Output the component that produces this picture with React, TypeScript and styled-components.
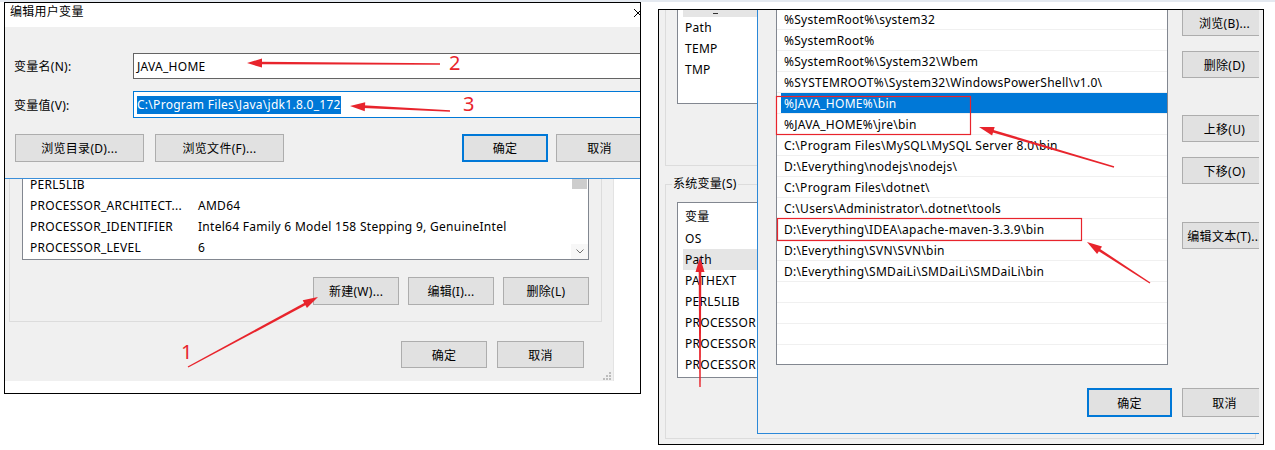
import styled, { createGlobalStyle } from 'styled-components';

const GlobalStyle = createGlobalStyle`
  html, body { margin: 0; padding: 0; background: #fff; }
  body {
    font-family: "Noto Sans", "Noto Sans CJK SC", sans-serif;
    font-size: 12px;
    letter-spacing: 0.28px;
    color: #000;
  }
  * { box-sizing: border-box; }
`;

const RED = '#e8242c';

const userVarRows = [
  ['PERL5LIB', ''],
  ['PROCESSOR_ARCHITECT...', 'AMD64'],
  ['PROCESSOR_IDENTIFIER', 'Intel64 Family 6 Model 158 Stepping 9, GenuineIntel'],
  ['PROCESSOR_LEVEL', '6'],
];

const sysVarRows = ['OS', 'Path', 'PATHEXT', 'PERL5LIB', 'PROCESSOR', 'PROCESSOR', 'PROCESSOR'];

const pathRows = [
  '%SystemRoot%\\system32',
  '%SystemRoot%',
  '%SystemRoot%\\System32\\Wbem',
  '%SYSTEMROOT%\\System32\\WindowsPowerShell\\v1.0\\',
  '%JAVA_HOME%\\bin',
  '%JAVA_HOME%\\jre\\bin',
  'C:\\Program Files\\MySQL\\MySQL Server 8.0\\bin',
  'D:\\Everything\\nodejs\\nodejs\\',
  'C:\\Program Files\\dotnet\\',
  'C:\\Users\\Administrator\\.dotnet\\tools',
  'D:\\Everything\\IDEA\\apache-maven-3.3.9\\bin',
  'D:\\Everything\\SVN\\SVN\\bin',
  'D:\\Everything\\SMDaiLi\\SMDaiLi\\SMDaiLi\\bin',
  '',
  '',
  '',
  '',
];

// annotation arrows: tail -> tip
const arrows = [
  [440, 64, 247, 63],
  [450, 111, 350, 106],
  [188, 367, 318, 297],
  [700, 387, 700, 257],
  [1114, 167, 979, 127],
  [1150, 283, 1087, 242],
];

const arrowShape = (x1: number, y1: number, x2: number, y2: number) => {
  const dx = x2 - x1;
  const dy = y2 - y1;
  const len = Math.hypot(dx, dy);
  const ux = dx / len;
  const uy = dy / len;
  const px = -uy;
  const py = ux;
  const bx = x2 - ux * 15;
  const by = y2 - uy * 15;
  const shaft = [
    `${x1 + px * 0.7},${y1 + py * 0.7}`,
    `${bx + ux * 2 + px * 1.3},${by + uy * 2 + py * 1.3}`,
    `${bx + ux * 2 - px * 1.3},${by + uy * 2 - py * 1.3}`,
    `${x1 - px * 0.7},${y1 - py * 0.7}`,
  ].join(' ');
  const head = [
    `${x2},${y2}`,
    `${bx + px * 4.5},${by + py * 4.5}`,
    `${bx - px * 4.5},${by - py * 4.5}`,
  ].join(' ');
  return { shaft, head };
};

export default function App() {
  return (
    <>
      <GlobalStyle />
      <Page>
        {/* left shot: edit user variable over env dialog */}
        <LeftShot>
          <EditDialog>
            <TitleBar>
              <span>编辑用户变量</span>
              <svg width="10" height="10" viewBox="0 0 10 10">
                <path d="M1 1 L9 9 M9 1 L1 9" stroke="#000" strokeWidth="1" />
              </svg>
            </TitleBar>
            <EditBody>
              <FieldRow>
                <span>变量名(N):</span>
                <Field>JAVA_HOME</Field>
              </FieldRow>
              <FieldRow $mt={12}>
                <span>变量值(V):</span>
                <Field $focused>
                  <Selected>C:\Program Files\Java\jdk1.8.0_172</Selected>
                </Field>
              </FieldRow>
              <EditButtons>
                <BtnGroup $gap={11}>
                  <Btn $w={129}>浏览目录(D)...</Btn>
                  <Btn $w={129}>浏览文件(F)...</Btn>
                </BtnGroup>
                <BtnGroup $gap={8}>
                  <Btn $w={86} $primary>确定</Btn>
                  <Btn $w={87}>取消</Btn>
                </BtnGroup>
              </EditButtons>
            </EditBody>
          </EditDialog>

          <EnvBack>
            <EnvClient>
              <EnvGroup>
                <VarList>
                  <VarRows>
                    {userVarRows.map(([k, v], i) => (
                      <VarRow key={i}>
                        <span>{k}</span>
                        <span>{v}</span>
                      </VarRow>
                    ))}
                  </VarRows>
                  <ScrollBar>
                    <Thumb />
                    <ScrollDown>
                      <svg width="8" height="5" viewBox="0 0 8 5">
                        <path d="M0.5 0.5 L4 4 L7.5 0.5" stroke="#707070" fill="none" />
                      </svg>
                    </ScrollDown>
                  </ScrollBar>
                </VarList>
                <RowButtons $gap={9} $mt={17}>
                  <Btn $w={86}>新建(W)...</Btn>
                  <Btn $w={86}>编辑(I)...</Btn>
                  <Btn $w={86}>删除(L)</Btn>
                </RowButtons>
              </EnvGroup>
              <RowButtons $gap={10} $mt={19} $pr={29}>
                <Btn $w={86} $h={27}>确定</Btn>
                <Btn $w={87} $h={27}>取消</Btn>
              </RowButtons>
              <Grip width="8" height="8" viewBox="0 0 8 8">
                {[[6, 0], [6, 3], [3, 3], [6, 6], [3, 6], [0, 6]].map(([x, y], i) => (
                  <rect key={i} x={x} y={y} width="2" height="2" fill="#bdbdbd" />
                ))}
              </Grip>
            </EnvClient>
          </EnvBack>
        </LeftShot>

        {/* right shot: edit environment variable over env dialog */}
        <RightShot>
          <LeftStrip>
            <UserGroup>
              <UserList>
                <CutRow>
                  <Dash />
                </CutRow>
                <StripRow>Path</StripRow>
                <StripRow>TEMP</StripRow>
                <StripRow>TMP</StripRow>
              </UserList>
            </UserGroup>
            <SysGroup>
              <Legend>系统变量(S)</Legend>
              <SysList>
                <StripRow $h={25}>变量</StripRow>
                {sysVarRows.map((r, i) => (
                  <StripRow key={i} $hover={r === 'Path'}>
                    {r}
                  </StripRow>
                ))}
              </SysList>
            </SysGroup>
          </LeftStrip>

          <RightCol>
            <EditEnv>
              <EditEnvInner>
                <TopArea>
                  <PathList>
                    <PathRows>
                      {pathRows.map((p, i) => (
                        <PathRow key={i}>
                          <PathFill $selected={i === 4}>{p}</PathFill>
                        </PathRow>
                      ))}
                    </PathRows>
                  </PathList>
                  <SideButtons>
                    <Btn $w={85} $h={27} $mt={-1}>浏览(B)...</Btn>
                    <Btn $w={85} $h={27} $mt={15}>删除(D)</Btn>
                    <Btn $w={85} $h={27} $mt={37}>上移(U)</Btn>
                    <Btn $w={85} $h={27} $mt={15}>下移(O)</Btn>
                    <Btn $w={85} $h={27} $mt={38}>编辑文本(T)...</Btn>
                  </SideButtons>
                </TopArea>
                <RowButtons $gap={10} $mt={23}>
                  <Btn $w={85} $h={29} $primary>确定</Btn>
                  <Btn $w={85} $h={29}>取消</Btn>
                </RowButtons>
              </EditEnvInner>
            </EditEnv>
            <GroupEdge />
          </RightCol>
        </RightShot>

        <Overlay width="1275" height="450" viewBox="0 0 1275 450">
          <rect x="776.5" y="96.5" width="194" height="38" fill="none" stroke={RED} strokeWidth="1.2" />
          <rect x="777.5" y="218.5" width="304" height="22" fill="none" stroke={RED} strokeWidth="1.2" />
          {arrows.map(([x1, y1, x2, y2], i) => {
            const a = arrowShape(x1, y1, x2, y2);
            return (
              <g key={i} fill={RED}>
                <polygon points={a.shaft} />
                <polygon points={a.head} />
              </g>
            );
          })}
          <Note x="449" y="70">2</Note>
          <Note x="463" y="111">3</Note>
          <Note x="181" y="359">1</Note>
        </Overlay>
      </Page>
    </>
  );
}

const Page = styled.div`
  position: relative;
  width: 1275px;
  height: 450px;
  overflow: hidden;
  display: flex;
  align-items: flex-start;
  padding: 2px 0 0 4px;
  background: linear-gradient(#e4e9f0, #e4e9f0) top / 100% 2px no-repeat, #fff;
`;

const LeftShot = styled.div`
  flex: none;
  width: 637px;
  height: 392px;
  border: 1px solid #000;
  background: #fff;
  overflow: hidden;
  display: flex;
  flex-direction: column;
`;

const EditDialog = styled.div`
  flex: none;
  height: 176px;
  background: #f0f0f0;
  border-bottom: 1px solid #3c8fd9;
  overflow: hidden;
`;

const TitleBar = styled.div`
  height: 24px;
  background: #fff;
  display: flex;
  justify-content: space-between;
  align-items: flex-start;
  padding: 1px 0 0 5px;
  line-height: 16px;
  svg {
    margin: 4px -3px 0 0;
  }
`;

const EditBody = styled.div`
  padding: 26px 0 0 9px;
`;

const FieldRow = styled.div<{ $mt?: number }>`
  display: grid;
  grid-template-columns: 119px 540px;
  align-items: center;
  margin-top: ${(p) => p.$mt ?? 0}px;
`;

const Field = styled.div<{ $focused?: boolean }>`
  height: ${(p) => (p.$focused ? 27 : 26)}px;
  background: #fff;
  border: 1px solid ${(p) => (p.$focused ? '#0078d7' : '#646464')};
  display: flex;
  align-items: center;
  padding-left: 3px;
`;

const Selected = styled.span`
  background: #0078d7;
  color: #fff;
  line-height: 18px;
`;

const EditButtons = styled.div`
  display: flex;
  justify-content: space-between;
  margin: 16px -3px 0 1px;
`;

const BtnGroup = styled.div<{ $gap: number }>`
  display: flex;
  gap: ${(p) => p.$gap}px;
`;

const Btn = styled.button<{ $w: number; $h?: number; $primary?: boolean; $mt?: number }>`
  flex: none;
  width: ${(p) => p.$w}px;
  height: ${(p) => p.$h ?? 28}px;
  margin-top: ${(p) => p.$mt ?? 0}px;
  padding: 0;
  border: ${(p) => (p.$primary ? '2px solid #0078d7' : '1px solid #adadad')};
  background: #e1e1e1;
  font: inherit;
  letter-spacing: inherit;
  color: #000;
  white-space: nowrap;
  display: flex;
  align-items: center;
  justify-content: center;
`;

const EnvBack = styled.div`
  flex: 1;
  display: flex;
  align-items: flex-start;
  background: #fff;
`;

const EnvClient = styled.div`
  width: 609px;
  height: 202px;
  background: #f0f0f0;
  border-right: 1px solid #e3e3e3;
  padding-left: 4px;
  display: flex;
  flex-direction: column;
`;

const EnvGroup = styled.div`
  width: 593px;
  border: 1px solid #dcdcdc;
  border-top: none;
  padding: 0 12px 16px;
`;

const VarList = styled.div`
  height: 81px;
  background: #fff;
  border: 1px solid #828790;
  border-top: none;
  display: flex;
  overflow: hidden;
`;

const VarRows = styled.div`
  flex: 1;
  margin-top: -5px;
`;

const VarRow = styled.div`
  height: 21px;
  display: grid;
  grid-template-columns: 168px 1fr;
  align-items: center;
  padding-left: 7px;
  white-space: nowrap;
`;

const ScrollBar = styled.div`
  width: 17px;
  display: flex;
  flex-direction: column;
  justify-content: space-between;
`;

const Thumb = styled.div`
  height: 10px;
  margin: 0 1px;
  background: #cdcdcd;
`;

const ScrollDown = styled.div`
  height: 15px;
  display: flex;
  align-items: center;
  justify-content: center;
  background: #f7f7f7;
`;

const RowButtons = styled.div<{ $gap: number; $mt: number; $pr?: number }>`
  display: flex;
  justify-content: flex-end;
  gap: ${(p) => p.$gap}px;
  margin-top: ${(p) => p.$mt}px;
  padding-right: ${(p) => p.$pr ?? 0}px;
`;

const Grip = styled.svg`
  align-self: flex-end;
  margin: auto 2px 1px 0;
`;

const RightShot = styled.div`
  flex: none;
  width: 606px;
  height: 436px;
  margin: 7px 0 0 17px;
  border: 1px solid #000;
  background: #f0f0f0;
  overflow: hidden;
  display: flex;
`;

const LeftStrip = styled.div`
  flex: none;
  width: 98px;
  padding-left: 6px;
  display: flex;
  flex-direction: column;
`;

const UserGroup = styled.div`
  height: 156px;
  border-left: 1px solid #dcdcdc;
  border-bottom: 1px solid #dcdcdc;
  padding-left: 11px;
`;

const UserList = styled.div`
  height: 94px;
  background: #fff;
  border-left: 1px solid #828790;
  border-bottom: 1px solid #828790;
`;

const CutRow = styled.div`
  height: 7px;
  margin-left: 5px;
  background: #e5e5e5;
  padding: 3px 0 0 30px;
`;

const Dash = styled.div`
  width: 5px;
  height: 1px;
  background: #333;
`;

const StripRow = styled.div<{ $h?: number; $hover?: boolean }>`
  height: ${(p) => p.$h ?? 21}px;
  display: flex;
  align-items: center;
  margin-left: ${(p) => (p.$hover ? 5 : 0)}px;
  padding-left: ${(p) => (p.$hover ? 2 : 7)}px;
  background: ${(p) => (p.$hover ? '#e5e5e5' : 'transparent')};
  white-space: nowrap;
`;

const SysGroup = styled.div`
  height: 255px;
  margin-top: 18px;
  border: 1px solid #dcdcdc;
  border-right: none;
  padding-left: 11px;
`;

const Legend = styled.div`
  width: fit-content;
  height: 16px;
  line-height: 16px;
  margin: -9px 0 0 -5px;
  padding: 0 1px;
  background: #f0f0f0;
  white-space: nowrap;
`;

const SysList = styled.div`
  height: 176px;
  margin-top: 10px;
  background: #fff;
  border: 1px solid #828790;
  border-right: none;
`;

const RightCol = styled.div`
  flex: 1;
  display: flex;
  flex-direction: column;
`;

const EditEnv = styled.div`
  flex: none;
  width: 502px;
  height: 424px;
  border-left: 1px solid #2b88d8;
  border-bottom: 1px solid #2b88d8;
  overflow: hidden;
`;

const EditEnvInner = styled.div`
  width: 509px;
  padding-left: 18px;
`;

const TopArea = styled.div`
  display: flex;
  align-items: flex-start;
`;

const PathList = styled.div`
  flex: none;
  width: 392px;
  height: 355px;
  background: #fff;
  border: 1px solid #828790;
  border-top: none;
  overflow: hidden;
`;

const PathRows = styled.div`
  margin-top: -1px;
`;

const PathRow = styled.div`
  height: 21px;
  border-bottom: 1px solid #f0f0f0;
`;

const PathFill = styled.div<{ $selected?: boolean }>`
  height: 20px;
  margin-left: 4px;
  padding-left: 3px;
  display: flex;
  align-items: center;
  white-space: nowrap;
  background: ${(p) => (p.$selected ? '#0078d7' : 'transparent')};
  color: ${(p) => (p.$selected ? '#fff' : '#000')};
`;

const SideButtons = styled.div`
  margin-left: 14px;
  display: flex;
  flex-direction: column;
`;

const GroupEdge = styled.div`
  width: 499px;
  height: 5px;
  border-right: 1px solid #dcdcdc;
  border-bottom: 1px solid #dcdcdc;
`;

const Overlay = styled.svg`
  position: absolute;
  left: 0;
  top: 0;
  pointer-events: none;
`;

const Note = styled.text`
  font-family: "Noto Sans", sans-serif;
  font-size: 20px;
  fill: ${RED};
`;
